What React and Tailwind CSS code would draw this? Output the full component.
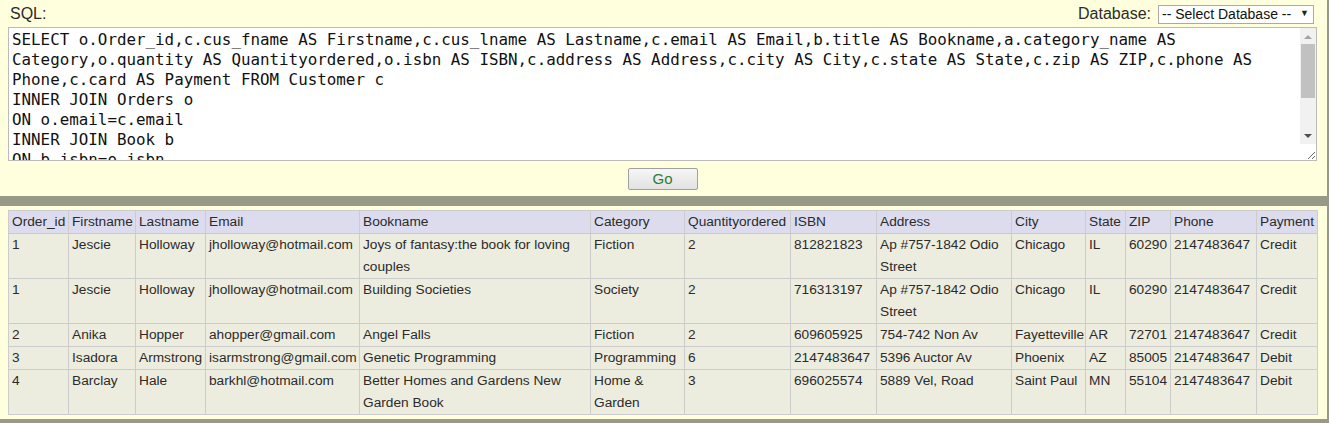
import React from 'react';

const sql = `SELECT o.Order_id,c.cus_fname AS Firstname,c.cus_lname AS Lastname,c.email AS Email,b.title AS Bookname,a.category_name AS Category,o.quantity AS Quantityordered,o.isbn AS ISBN,c.address AS Address,c.city AS City,c.state AS State,c.zip AS ZIP,c.phone AS Phone,c.card AS Payment FROM Customer c
INNER JOIN Orders o
ON o.email=c.email
INNER JOIN Book b
ON b.isbn=o.isbn
INNER JOIN Category a
ON a.category_id=b.category_id
WHERE o.quantity > 0
ORDER BY o.Order_id
LIMIT 100;`;

const cols = [
  ['Order_id', 60],
  ['Firstname', 67],
  ['Lastname', 70],
  ['Email', 154],
  ['Bookname', 231],
  ['Category', 94],
  ['Quantityordered', 106],
  ['ISBN', 86],
  ['Address', 135],
  ['City', 74],
  ['State', 40],
  ['ZIP', 45],
  ['Phone', 86],
  ['Payment', 61],
];

const rows = [
  ['1', 'Jescie', 'Holloway', 'jholloway@hotmail.com', ['Joys of fantasy:the book for loving', 'couples'], 'Fiction', '2', '812821823', ['Ap #757-1842 Odio', 'Street'], 'Chicago', 'IL', '60290', '2147483647', 'Credit'],
  ['1', 'Jescie', 'Holloway', 'jholloway@hotmail.com', 'Building Societies', 'Society', '2', '716313197', ['Ap #757-1842 Odio', 'Street'], 'Chicago', 'IL', '60290', '2147483647', 'Credit'],
  ['2', 'Anika', 'Hopper', 'ahopper@gmail.com', 'Angel Falls', 'Fiction', '2', '609605925', '754-742 Non Av', 'Fayetteville', 'AR', '72701', '2147483647', 'Credit'],
  ['3', 'Isadora', 'Armstrong', 'isarmstrong@gmail.com', 'Genetic Programming', 'Programming', '6', '2147483647', '5396 Auctor Av', 'Phoenix', 'AZ', '85005', '2147483647', 'Debit'],
  ['4', 'Barclay', 'Hale', 'barkhl@hotmail.com', ['Better Homes and Gardens New', 'Garden Book'], ['Home &', 'Garden'], '3', '696025574', '5889 Vel, Road', 'Saint Paul', 'MN', '55104', '2147483647', 'Debit'],
];

function Cell({ value }) {
  if (Array.isArray(value)) {
    return (
      <>
        {value[0]}
        <br />
        {value[1]}
      </>
    );
  }
  return value;
}

// stand-in for the textarea's classic scrollbar
function FakeScrollbar() {
  return (
    <div className="pointer-events-none absolute right-[1px] top-[1px] flex h-[116px] w-[16px] flex-col bg-[#f1f1f1]">
      <div className="flex h-[16px] items-center justify-center">
        <svg width="8" height="5" viewBox="0 0 8 5">
          <path d="M0 5 L4 1 L8 5 Z" fill="#a3a3a3" />
        </svg>
      </div>
      <div className="mx-[1px] h-[54px] bg-[#c1c1c1]" />
      <div className="flex-1" />
      <div className="flex h-[16px] items-center justify-center">
        <svg width="8" height="5" viewBox="0 0 8 5">
          <path d="M0 0 L8 0 L4 4 Z" fill="#505050" />
        </svg>
      </div>
    </div>
  );
}

export default function App() {
  return (
    <div className="w-[1329px] h-[423px] bg-[#999988] overflow-hidden font-['Liberation_Sans',Arial,sans-serif] text-[#2b2b2b]">
      {/* query panel */}
      <div className="mr-[2px] h-[196px] bg-[#ffffdd] pl-2 pr-[10px]">
        <div className="flex h-[27px] items-center justify-between">
          <span className="pl-[2px] text-[16px]">SQL:</span>
          <div className="mr-[3px] flex items-center gap-[7px]">
            <span className="text-[16px]">Database:</span>
            <div className="relative">
              <select className="h-[19px] w-[156px] appearance-none border border-[#a9a9a9] bg-white pl-[3px] text-[14px] leading-[17px] text-[#111] outline-none">
                <option>-- Select Database --</option>
              </select>
              <span className="pointer-events-none absolute inset-y-0 right-[5px] flex items-center text-[9px] text-[#222]">▼</span>
            </div>
          </div>
        </div>
        <div className="relative">
          <textarea
            defaultValue={sql}
            spellCheck={false}
            className="block h-[134px] w-[1309px] border border-[#bbbbbb] bg-white pl-[3px] pr-[20px] pt-[2px] font-['DejaVu_Sans_Mono',monospace] text-[15.85px] leading-[20px] text-[#111] outline-none"
          />
          <FakeScrollbar />
        </div>
        <div className="mt-[7px] flex justify-center">
          <button className="h-[22px] w-[70px] rounded-[2px] border border-[#a0a0a0] bg-gradient-to-b from-[#f6f6f6] to-[#e2e2e2] text-[15px] leading-[20px] text-[#2e7d32]">
            Go
          </button>
        </div>
      </div>

      {/* results panel */}
      <div className="mr-[2px] mt-[10px] h-[213px] bg-[#ffffdd] pl-2 pt-[4px]">
        <table className="w-[1309px] table-fixed border-collapse text-[13.7px] leading-[22px]">
          <colgroup>
            {cols.map(([name, w]) => (
              <col key={name} style={{ width: w }} />
            ))}
          </colgroup>
          <thead>
            <tr className="bg-[#dcdcee]">
              {cols.map(([name]) => (
                <th key={name} className="whitespace-nowrap border border-[#cccccc] px-[3px] py-0 text-left font-normal">
                  {name}
                </th>
              ))}
            </tr>
          </thead>
          <tbody>
            {rows.map((row, i) => (
              <tr key={i} className="bg-[#ededdf]">
                {row.map((v, j) => (
                  <td key={j} className="whitespace-nowrap border border-[#cccccc] px-[3px] py-0 align-top">
                    <Cell value={v} />
                  </td>
                ))}
              </tr>
            ))}
          </tbody>
        </table>
      </div>
    </div>
  );
}
